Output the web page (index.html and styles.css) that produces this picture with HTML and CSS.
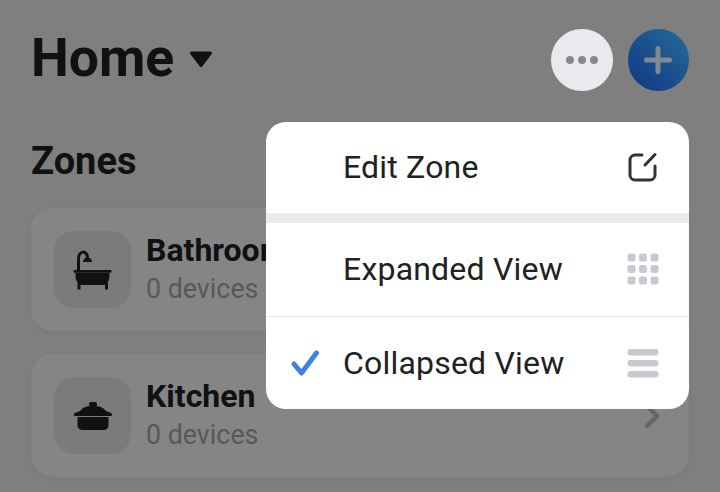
FILE: index.html
```html
<!DOCTYPE html>
<html lang="en">
<head>
    <meta charset="UTF-8">
    <meta name="viewport" content="width=device-width, initial-scale=1.0">
    <title>Home</title>
    <link rel="stylesheet" href="styles.css">
</head>
<body>

    <div class="screen">
        <div class="header">
            <h1 class="title">Home
                <svg class="caret" width="24" height="17" viewBox="0 0 24 17">
                    <path d="M2.500 2 H21.500 L12 14.500 Z" fill="#212121" stroke="#212121" stroke-width="3" stroke-linejoin="round"/>
                </svg>
            </h1>
            <div class="actions">
                <button class="round-btn more">
                    <svg width="32" height="10" viewBox="0 0 32 10">
                        <circle cx="4" cy="5" r="4" fill="#86868c"/>
                        <circle cx="16" cy="5" r="4" fill="#86868c"/>
                        <circle cx="28" cy="5" r="4" fill="#86868c"/>
                    </svg>
                </button>
                <button class="round-btn add">
                    <svg width="28" height="28" viewBox="0 0 28 28">
                        <path d="M14 2.500 V25.500 M2.500 14 H25.500" stroke="#7f8a93" stroke-width="5" stroke-linecap="round"/>
                    </svg>
                </button>
            </div>
        </div>

        <h2 class="section">Zones</h2>

        <div class="zones">
            <div class="zone">
                <div class="tile">
                    <svg width="40" height="40" viewBox="0 0 40 40">
                        <path d="M5.500 21 V9 C5.500 0 14.500 0 14.500 8" fill="none" stroke="#212121" stroke-width="3"/>
                        <path d="M10 12 a4.500 4.500 0 0 1 9 0 Z" fill="#212121"/>
                        <rect x="0.500" y="20" width="38" height="2.800" rx="1" fill="#212121"/>
                        <path d="M2.500 23 H36.500 V25 C36.500 31 34 35 30 35 H9 C5 35 2.500 31 2.500 25 Z" fill="#212121"/>
                        <rect x="4.500" y="33" width="3" height="6.500" fill="#212121"/>
                        <rect x="32" y="33" width="3" height="6.500" fill="#212121"/>
                    </svg>
                </div>
                <div class="zone-text">
                    <div class="zone-name">Bathroom</div>
                    <div class="zone-count">0 devices</div>
                </div>
                <svg class="chevron" width="16" height="26" viewBox="0 0 16 26">
                    <path d="M3 3 L13 13 L3 23" fill="none" stroke="#c4c4c4" stroke-width="4.500" stroke-linecap="round" stroke-linejoin="round"/>
                </svg>
            </div>
            <div class="zone">
                <div class="tile">
                    <svg width="40" height="40" viewBox="0 0 40 40">
                        <rect x="16" y="6" width="8" height="5" rx="2" fill="#212121"/>
                        <path d="M7 15 C10 11 14 10 20 10 C26 10 30 11 33 15 L38 17 C39.500 17.500 39.500 20 38 20 H2 C0.500 20 0.500 17.500 2 17 Z" fill="#212121"/>
                        <path d="M4.500 21 H35.500 V29 C35.500 32.500 33.500 34 30 34 H10 C6.500 34 4.500 32.500 4.500 29 Z" fill="#212121"/>
                    </svg>
                </div>
                <div class="zone-text">
                    <div class="zone-name">Kitchen</div>
                    <div class="zone-count">0 devices</div>
                </div>
                <svg class="chevron" width="16" height="26" viewBox="0 0 16 26">
                    <path d="M3 3 L13 13 L3 23" fill="none" stroke="#c4c4c4" stroke-width="4.500" stroke-linecap="round" stroke-linejoin="round"/>
                </svg>
            </div>
        </div>

        <div class="scrim"></div>

        <div class="menu">
            <div class="menu-item first">
                <span class="check"></span>
                <span class="menu-label">Edit Zone</span>
                <svg width="32" height="32" viewBox="0 0 32 32">
                    <path d="M15 4 H8 A5 5 0 0 0 3 9 V24 A5 5 0 0 0 8 29 H23 A5 5 0 0 0 28 24 V15" fill="none" stroke="#333" stroke-width="3" stroke-linecap="round"/>
                    <path d="M18 14 L28 3.500" fill="none" stroke="#333" stroke-width="3" stroke-linecap="round"/>
                </svg>
            </div>
            <div class="menu-item second">
                <span class="check"></span>
                <span class="menu-label">Expanded View</span>
                <svg width="32" height="32" viewBox="0 0 32 32">
                    <rect x="0.500" y="0.500" width="8" height="8" rx="2.500" fill="#c8c8d0"/>
                    <rect x="12" y="0.500" width="8" height="8" rx="2.500" fill="#c8c8d0"/>
                    <rect x="23.500" y="0.500" width="8" height="8" rx="2.500" fill="#c8c8d0"/>
                    <rect x="0.500" y="12" width="8" height="8" rx="2.500" fill="#c8c8d0"/>
                    <rect x="12" y="12" width="8" height="8" rx="2.500" fill="#c8c8d0"/>
                    <rect x="23.500" y="12" width="8" height="8" rx="2.500" fill="#c8c8d0"/>
                    <rect x="0.500" y="23.500" width="8" height="8" rx="2.500" fill="#c8c8d0"/>
                    <rect x="12" y="23.500" width="8" height="8" rx="2.500" fill="#c8c8d0"/>
                    <rect x="23.500" y="23.500" width="8" height="8" rx="2.500" fill="#c8c8d0"/>
                </svg>
            </div>
            <div class="menu-item">
                <span class="check">
                    <svg width="30" height="28" viewBox="0 0 30 28">
                        <path d="M4 15 L11.500 24 L26.500 4" fill="none" stroke="#3f80e8" stroke-width="5" stroke-linecap="round" stroke-linejoin="round"/>
                    </svg>
                </span>
                <span class="menu-label">Collapsed View</span>
                <svg width="32" height="32" viewBox="0 0 32 32">
                    <rect x="0.500" y="2" width="31" height="6.500" rx="3" fill="#c8c8d0"/>
                    <rect x="0.500" y="13" width="31" height="6.500" rx="3" fill="#c8c8d0"/>
                    <rect x="0.500" y="24" width="31" height="6.500" rx="3" fill="#c8c8d0"/>
                </svg>
            </div>
        </div>
    </div>

</body>
</html>
```

FILE: styles.css
```css
* {
  margin: 0;
  padding: 0;
  box-sizing: border-box;
}
body {
  font-family: Roboto, Arial, sans-serif;
  background-color: #f4f4f5;
  color: #212121;
}
.screen {
  position: relative;
  width: 720px;
  height: 492px;
  overflow: hidden;
  padding: 29px 31px 0 31px;
}
.header {
  display: flex;
  align-items: center;
  justify-content: space-between;
  height: 62px;
}
.title {
  display: flex;
  align-items: center;
  gap: 15px;
  margin-bottom: 4px;
  font-size: 53.500px;
  font-weight: 700;
  line-height: 62px;
}
.caret {
  margin-top: 2px;
}
.actions {
  display: flex;
  gap: 15px;
  position: relative;
  z-index: 2;
}
.round-btn {
  display: flex;
  align-items: center;
  justify-content: center;
  width: 61.500px;
  height: 61.500px;
  border: none;
  border-radius: 50%;
}
.more {
  background: #e9e9ee;
}
.add {
  background: linear-gradient(to top right, #123686, #256b95);
}
.section {
  margin-top: 49px;
  font-size: 38px;
  font-weight: 700;
  line-height: 42px;
}
.zones {
  display: flex;
  flex-direction: column;
  gap: 23px;
  margin-top: 26px;
}
.zone {
  display: flex;
  align-items: center;
  height: 123px;
  padding: 0 29px 0 23px;
  background: #fff;
  border-radius: 22px;
  box-shadow: 0 2px 8px rgba(0, 0, 0, 0.06);
}
.tile {
  display: flex;
  align-items: center;
  justify-content: center;
  flex: none;
  width: 77px;
  height: 77px;
  background: #ebebf0;
  border-radius: 20px;
}
.zone-text {
  flex: 1;
  margin-left: 15px;
}
.zone-name {
  margin-bottom: 4px;
  font-size: 32px;
  font-weight: 700;
  line-height: 34px;
}
.zone-count {
  font-size: 26.800px;
  line-height: 36px;
  color: #aaaaaa;
}
.scrim {
  position: absolute;
  inset: 0;
  background: rgba(0, 0, 0, 0.48);
  z-index: 1;
}
.menu {
  position: absolute;
  top: 122px;
  left: 266px;
  width: 423px;
  height: 287px;
  background: #fff;
  border-radius: 20px;
  overflow: hidden;
  z-index: 2;
}
.menu-item {
  display: flex;
  align-items: center;
  height: 92px;
  padding-right: 30px;
}
.menu-item.first {
  height: 101px;
  padding-bottom: 2px;
  border-bottom: 10px solid #e9e9ee;
}
.menu-item.second {
  height: 94px;
  padding-bottom: 2px;
  border-bottom: 1px solid #e6e6ea;
}
.check {
  display: flex;
  justify-content: center;
  width: 77px;
}
.menu-label {
  flex: 1;
  font-size: 32px;
  letter-spacing: 0.200px;
  color: #212121;
}
```
